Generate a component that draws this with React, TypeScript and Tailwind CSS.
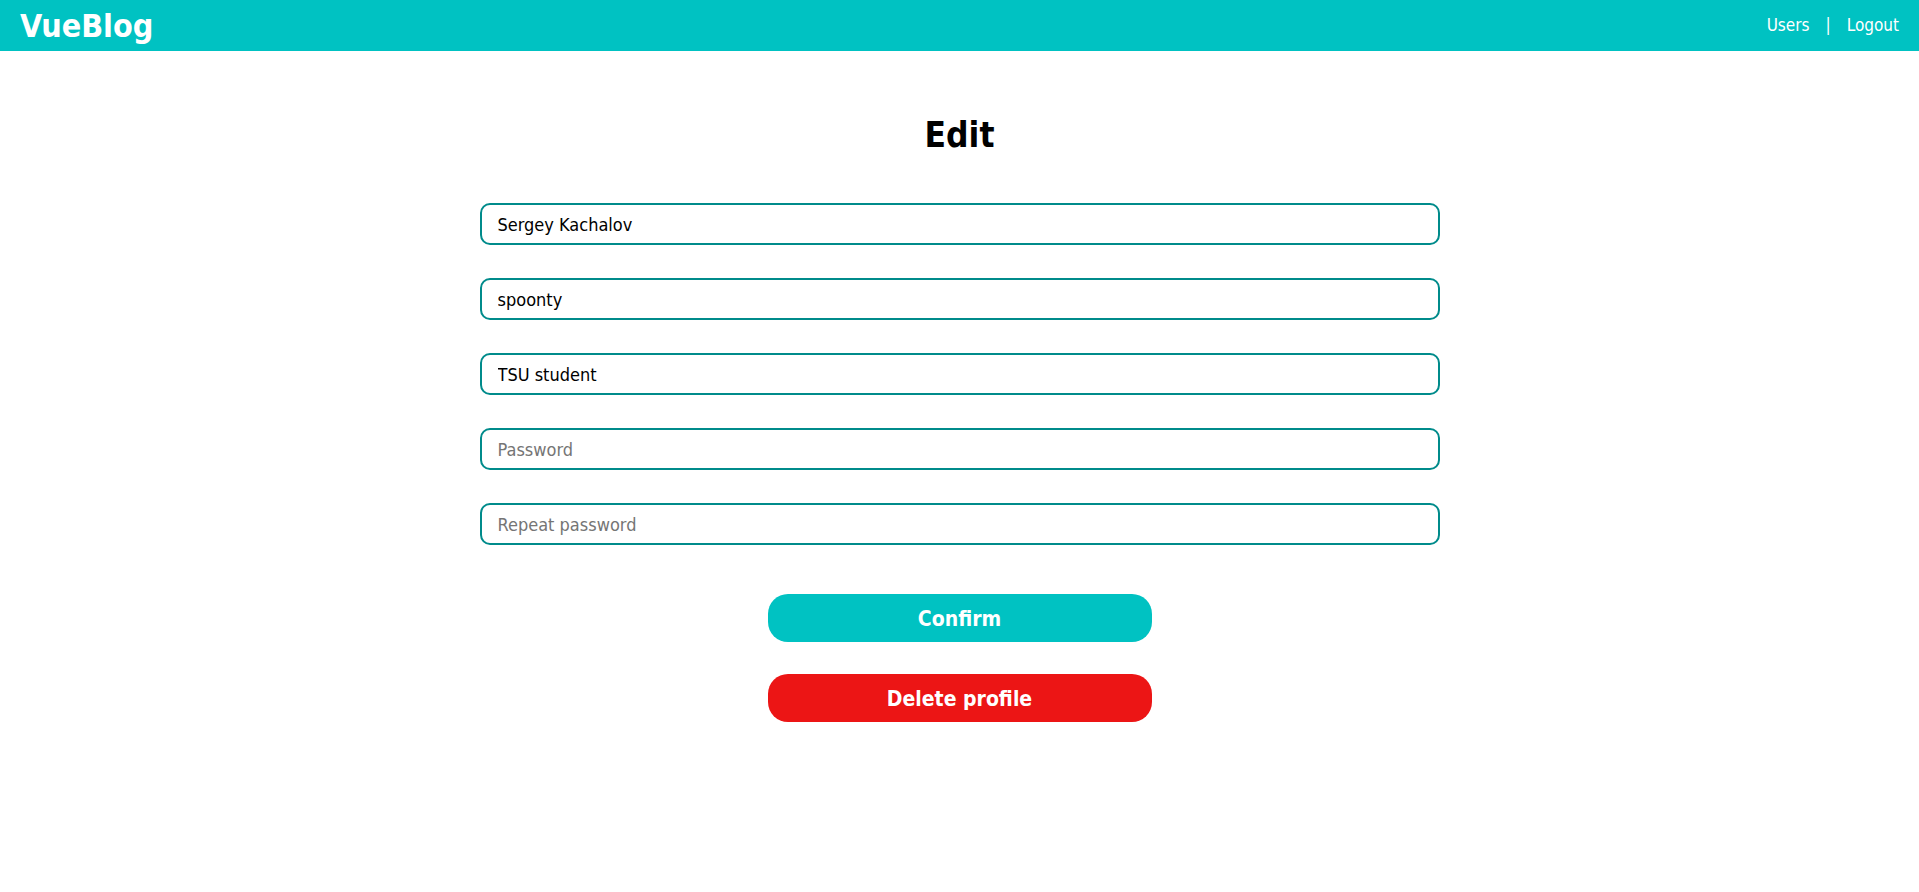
import { useState } from "react";

const font = "font-['DejaVu_Sans_Condensed','DejaVu_Sans',sans-serif]";

function Field({ value, placeholder, type = "text" }: { value?: string; placeholder: string; type?: string }) {
  const [v, setV] = useState(value ?? "");
  return (
    <input
      type={type}
      value={v}
      placeholder={placeholder}
      onChange={(e) => setV(e.target.value)}
      className="block h-[42px] w-full rounded-[10px] border-2 border-[#008b8b] bg-white px-4 text-[18px] text-black outline-none placeholder:text-[#757575]"
    />
  );
}

export default function App() {
  return (
    <div className={`min-h-screen bg-white ${font}`}>
      <header className="flex h-[51px] items-center justify-between bg-[#00c2c2] px-5 text-white">
        <a href="#" className="text-[32px] font-bold">VueBlog</a>
        <nav className="flex items-center gap-4 text-[17px]">
          <a href="#">Users</a>
          <span>|</span>
          <a href="#">Logout</a>
        </nav>
      </header>

      <main className="mx-auto flex w-[960px] flex-col items-center">
        <h1 className="mt-[63px] text-[35px] font-bold leading-[42px] text-black">Edit</h1>

        <form className="mt-[47px] flex w-full flex-col gap-[33px]" onSubmit={(e) => e.preventDefault()}>
          <Field value="Sergey Kachalov" placeholder="Name" />
          <Field value="spoonty" placeholder="Login" />
          <Field value="TSU student" placeholder="About" />
          <Field type="password" placeholder="Password" />
          <Field type="password" placeholder="Repeat password" />
        </form>

        <div className="mt-[49px] flex flex-col gap-8">
          <button className="h-12 w-[384px] rounded-[20px] bg-[#00c2c2] pt-[4px] text-[21px] font-bold text-white">
            Confirm
          </button>
          <button className="h-12 w-[384px] rounded-[20px] bg-[#ec1515] pt-[4px] text-[21px] font-bold text-white">
            Delete profile
          </button>
        </div>
      </main>
    </div>
  );
}
